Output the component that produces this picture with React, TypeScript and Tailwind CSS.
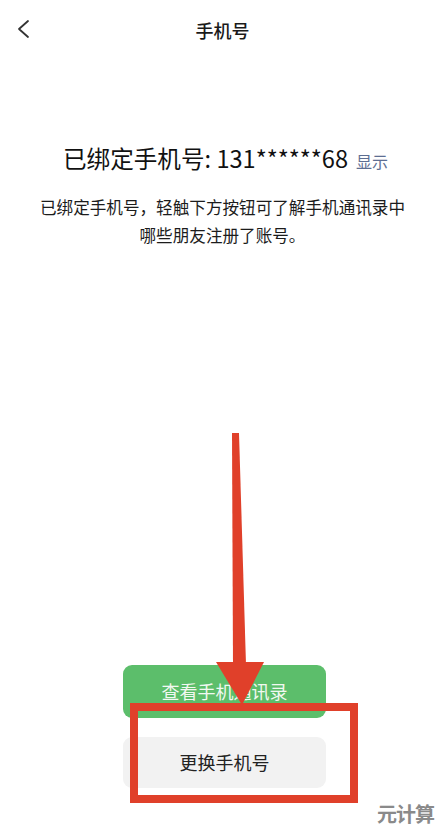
import React from "react";

export default function App() {
  return (
    <div
      className="relative w-[445px] h-[832px] bg-white overflow-hidden"
      style={{ fontFamily: '"Noto Sans CJK SC", "Noto Sans", sans-serif' }}
    >
      {/* Header */}
      <div className="relative h-[60px] flex items-center justify-center">
        <svg
          className="absolute left-[16px] top-[19px]"
          width="16"
          height="20"
          viewBox="0 0 16 20"
          fill="none"
        >
          <path d="M12 2 L3 10 L12 18" stroke="#333" strokeWidth="1.8" strokeLinecap="round" strokeLinejoin="round" />
        </svg>
        <span className="text-[18px] font-medium text-[#1a1a1a] leading-none">手机号</span>
      </div>

      {/* Main info */}
      <div className="mt-[87px] flex items-baseline justify-center pl-[6px]">
        <span className="text-[23.6px] text-[#111] leading-none">已绑定手机号: 131******68</span>
        <span className="ml-[8px] text-[16px] text-[#5d6e92] leading-none">显示</span>
      </div>
      <div className="mt-[22px] flex flex-col items-center text-[16.6px] leading-[28px] text-[#1c1c1c]">
        <span>已绑定手机号，轻触下方按钮可了解手机通讯录中</span>
        <span>哪些朋友注册了账号。</span>
      </div>

      {/* Buttons */}
      <div className="mt-[416px] flex flex-col items-start pl-[123px] gap-[19px]">
        <div className="w-[203px] h-[53px] rounded-[9px] bg-[#5cbe6b] flex items-center justify-center text-[18px] text-[#f1f8f1]">
          查看手机通讯录
        </div>
        <div className="w-[203px] h-[51px] rounded-[9px] bg-[#f2f2f2] flex items-center justify-center text-[18px] text-[#222]">
          更换手机号
        </div>
      </div>

      {/* Annotation: red arrow */}
      <svg className="absolute left-0 top-0 pointer-events-none" width="445" height="832" viewBox="0 0 445 832">
        <polygon points="232,433 239,433 246,665 233,665" fill="#e0402a" />
        <polygon points="216,662 264,662 242,705" fill="#e0402a" />
      </svg>

      {/* Annotation: red box */}
      <div className="absolute left-[130px] top-[703px] w-[228px] h-[100px] border-[8px] border-[#e0402a] pointer-events-none" />

      {/* Watermark */}
      <div className="absolute left-[377px] top-[804px] text-[20px] font-bold text-[#8a8a8a] leading-none tracking-[-1px]">
        元计算
      </div>
    </div>
  );
}
